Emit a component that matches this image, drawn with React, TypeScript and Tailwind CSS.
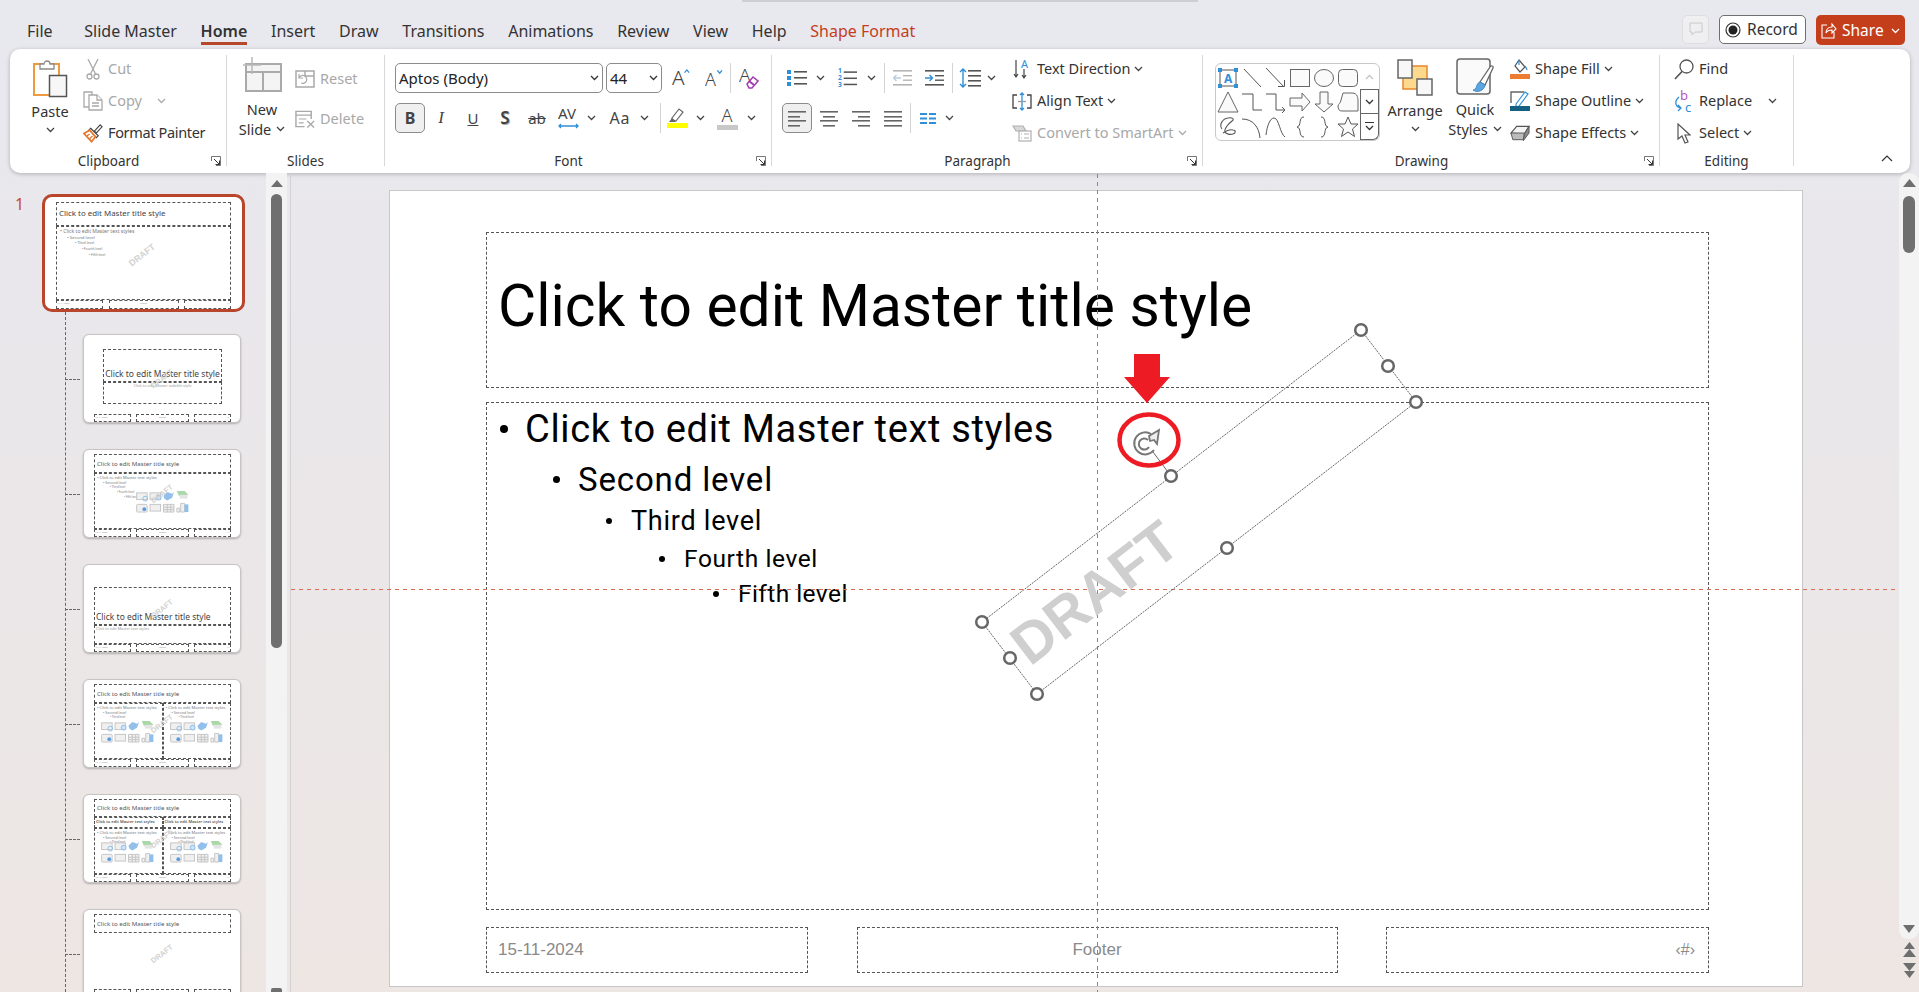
import type { ReactNode } from 'react';

const GRAY = '#a9a9a9';
const BLUE = '#2f8fd8';

function Chev({ color = '#444' }: { color?: string }) {
  return (
    <svg width="9" height="6" viewBox="0 0 9 6" className="shrink-0">
      <path d="M1 1l3.5 3.5L8 1" fill="none" stroke={color} strokeWidth="1.3" />
    </svg>
  );
}

function Slot({ className = '', children }: { className?: string; children?: ReactNode }) {
  return <div className={`flex shrink-0 items-center justify-center ${className}`}>{children}</div>;
}

function Sep({ className = '' }: { className?: string }) {
  return <div className={`w-px shrink-0 self-stretch bg-[#d4d4d4] ${className}`} />;
}

function GroupSep() {
  return <div className="mt-[2px] mb-[4px] w-px shrink-0 bg-[#d8d8d8]" />;
}

function Launcher() {
  return (
    <svg width="10" height="10" viewBox="0 0 10 10" className="mr-[5px] ml-[4px] shrink-0">
      <path d="M.5 5V.5H9.5V9.5H5" fill="none" stroke="#777" />
      <path d="M3 3l5.5 5.5M8.5 4.5v4h-4" fill="none" stroke="#333" />
    </svg>
  );
}

function GroupLabel({ children, launcher }: { children: string; launcher?: boolean }) {
  return (
    <div className="flex h-[21px] shrink-0 items-center pt-[3px] text-[13.5px] leading-[18px] text-[#333]">
      <div className="flex-1 text-center">{children}</div>
      {launcher && <Launcher />}
    </div>
  );
}

function Row({ icon, label, disabled, chev, chevClass = 'ml-[4px]', labelClass = '' }: { icon: ReactNode; label: string; disabled?: boolean; chev?: boolean; chevClass?: string; labelClass?: string }) {
  return (
    <div className={`flex h-[32px] items-center text-[14.5px] ${disabled ? 'text-[#a8a8a8]' : 'text-[#333]'}`}>
      <Slot className="w-[20px]">{icon}</Slot>
      <span className={`ml-[5px] whitespace-nowrap ${labelClass}`}>{label}</span>
      {chev && <span className={`flex ${chevClass}`}><Chev color={disabled ? '#aaa' : '#444'} /></span>}
    </div>
  );
}

function ComboBox({ className, text }: { className: string; text: string }) {
  return (
    <div className={`flex h-[30px] shrink-0 items-center justify-between rounded-[5px] border border-[#8b8b8b] bg-white pr-[3px] pl-[3px] text-[15px] leading-[20px] text-[#222] ${className}`}>
      <span>{text}</span>
      <Chev color="#333" />
    </div>
  );
}

function Lines({ rows, w = 18, color = '#666' }: { rows: number[][]; w?: number; color?: string }) {
  return (
    <svg width={w} height="18" viewBox={`0 0 ${w} 18`}>
      {rows.map(([a, b, y], i) => (
        <rect key={i} x={a} y={y} width={b - a} height="1.6" fill={color} />
      ))}
    </svg>
  );
}

function Bullets() {
  return (
    <svg width="20" height="18" viewBox="0 0 20 18">
      {[2, 8, 14].map(y => (
        <g key={y}>
          <rect x="0" y={y - 1} width="4" height="4" fill={BLUE} />
          <rect x="7" y={y} width="13" height="1.6" fill="#555" />
        </g>
      ))}
    </svg>
  );
}

function Numbering() {
  return (
    <svg width="20" height="20" viewBox="0 0 20 20">
      {[['1', 5], ['2', 12], ['3', 19]].map(([t, y]) => (
        <text key={t} x="0" y={y} fontSize="7" fontWeight="700" fill={BLUE} fontFamily="Noto Sans">{t}</text>
      ))}
      {[3, 9.5, 16].map(y => <rect key={y} x="6" y={y} width="14" height="1.6" fill="#555" />)}
    </svg>
  );
}

function IndentIcon({ dir }: { dir: 'in' | 'out' }) {
  const c = dir === 'out' ? '#b5b5b5' : '#555';
  return (
    <svg width="19" height="18" viewBox="0 0 19 18">
      <rect x="0" y="1" width="19" height="1.6" fill={c} />
      <rect x="0" y="15" width="19" height="1.6" fill={c} />
      <rect x="10" y="6" width="9" height="1.4" fill={c} />
      <rect x="10" y="10.5" width="9" height="1.4" fill={c} />
      {dir === 'in' ? (
        <path d="M0 9h7M4.500 6l3 3-3 3" fill="none" stroke={BLUE} strokeWidth="1.4" />
      ) : (
        <path d="M8 9H1M3.500 6l-3 3 3 3" fill="none" stroke="#b9cfe0" strokeWidth="1.4" />
      )}
    </svg>
  );
}

// ---- ribbon icons ----

function PasteIcon() {
  return (
    <svg width="35" height="39" viewBox="0 0 35 39">
      <rect x="1" y="5" width="25" height="31" fill="#fff" stroke="#ee9b40" strokeWidth="2" />
      <path d="M7 10V5h4a3 3 0 0 1 6 0h4v5z" fill="#fff" stroke="#8a8a8a" strokeWidth="1.3" />
      <rect x="16.500" y="16.500" width="17" height="21" fill="#f7f7f7" stroke="#555" strokeWidth="1.500" />
    </svg>
  );
}

function CutIcon() {
  return (
    <svg width="14" height="21" viewBox="0 0 14 21" fill="none" stroke={GRAY} strokeWidth="1.3">
      <path d="M2 0l7.500 15M12 0L4.500 15" />
      <circle cx="3.500" cy="17.500" r="2.500" />
      <circle cx="10.500" cy="17.500" r="2.500" />
    </svg>
  );
}

function CopyIcon() {
  return (
    <svg width="20" height="20" viewBox="0 0 20 20" fill="#fff" stroke={GRAY} strokeWidth="1.3">
      <path d="M1 1h8v15H1z" />
      <path d="M6 4h8l5 5v10H6z" />
      <path d="M14 4v5h5M9 12h7M9 15h7" />
    </svg>
  );
}

function PainterIcon() {
  return (
    <svg width="21" height="20" viewBox="0 0 21 20" fill="none">
      <path d="M12 8l6-6.500 2 2L14 10z" fill="#fff" stroke="#444" strokeWidth="1.2" />
      <path d="M8 5l8 8-2 2-8-8z" fill="#fff" stroke="#444" strokeWidth="1.2" />
      <path d="M7 7L1 10.500 9 19l4-5z" fill="#fff" stroke="#e8772e" strokeWidth="1.800" />
      <path d="M4 13l3-2M7 16l3-3" stroke="#e8772e" strokeWidth="1.400" />
    </svg>
  );
}

function NewSlideIcon() {
  return (
    <svg width="39" height="35" viewBox="0 0 39 35" fill="none" stroke="#aaa" strokeWidth="2">
      <rect x="3" y="7" width="35" height="27" fill="#f4f4f4" />
      <path d="M3 15h35M20 15v19" />
      <path d="M9 0v17M0 8h18" strokeWidth="1.500" stroke="#b8b8b8" />
    </svg>
  );
}

function ResetIcon() {
  return (
    <svg width="20" height="18" viewBox="0 0 20 18" fill="none" stroke={GRAY} strokeWidth="1.500">
      <rect x="1" y="1" width="18" height="16" />
      <path d="M10 1v5h9" />
      <path d="M4 8a4 4 0 1 1 2 5M4 4v4h4" strokeWidth="1.200" />
    </svg>
  );
}

function DeleteIcon() {
  return (
    <svg width="21" height="18" viewBox="0 0 21 18" fill="none" stroke={GRAY} strokeWidth="1.500">
      <path d="M17 9V1H1v16h9" />
      <path d="M1 5h16M4 9h8M4 13h5" strokeWidth="1.200" />
      <path d="M13 11l7 7M20 11l-7 7" strokeWidth="1.400" />
    </svg>
  );
}

function TextDirIcon() {
  return (
    <svg width="19" height="22" viewBox="0 0 19 22" fill="none" stroke="#444" strokeWidth="1.200">
      <path d="M3 2v17M1 16l2 3 2-3M11 11v9M9 17l2 3 2-3" />
      <text x="8" y="10" fontSize="11" fill={BLUE} stroke="none" fontFamily="Noto Sans">A</text>
    </svg>
  );
}

function AlignTextIcon() {
  return (
    <svg width="20" height="19" viewBox="0 0 20 19" fill="none" stroke="#444" strokeWidth="1.300">
      <path d="M5 3H1v13h4M15 3h4v13h-4" />
      <path d="M10 1v17M8 3l2-2 2 2M8 16l2 2 2-2" stroke={BLUE} />
      <path d="M6 9.500h8" stroke="#999" />
    </svg>
  );
}

function SmartArtIcon() {
  return (
    <svg width="20" height="17" viewBox="0 0 20 17" fill="none" stroke="#b0b0b0" strokeWidth="1.200">
      <path d="M1 1h10l3 5H4z" fill="#d8d8d8" />
      <rect x="7" y="6" width="12" height="10" fill="#fff" />
      <path d="M9 9h1M12 9h5M9 13h1M12 13h5" />
    </svg>
  );
}

function ArrangeIcon() {
  return (
    <svg width="37" height="37" viewBox="0 0 37 37">
      <rect x="6" y="7" width="24" height="23" fill="#fdd98e" stroke="#e8862e" strokeWidth="1.500" />
      <rect x="1" y="1" width="14" height="18" fill="#f8f8f8" stroke="#666" strokeWidth="1.500" />
      <rect x="20" y="20" width="15" height="16" fill="#f8f8f8" stroke="#666" strokeWidth="1.500" />
    </svg>
  );
}

function QuickStylesIcon() {
  return (
    <svg width="39" height="39" viewBox="0 0 39 39" fill="none">
      <rect x="1" y="1" width="33" height="35" rx="3" fill="#fafafa" stroke="#666" strokeWidth="1.500" />
      <path d="M24 24L34 9c1-2 4-1 3 1L29 27z" fill="#fff" stroke="#666" strokeWidth="1.300" />
      <path d="M24 24c-3 1-3 4-4 6-1 1-2 2-3 2 4 3 11 1 12-5z" fill="#5ba6e0" stroke="#3f87c2" strokeWidth="1" />
    </svg>
  );
}

function ShapeFillIcon() {
  return (
    <svg width="20" height="20" viewBox="0 0 20 20">
      <path d="M9 1l6 7-5 5-5-6z" fill="#fff" stroke="#555" strokeWidth="1.200" />
      <path d="M9 1v5M15 7c1 2 2 3 2 4" fill="none" stroke="#2f8fd8" strokeWidth="1.200" />
      <rect x="0" y="15" width="20" height="5" fill="#ed7d31" />
    </svg>
  );
}

function ShapeOutlineIcon() {
  return (
    <svg width="20" height="20" viewBox="0 0 20 20" fill="none">
      <path d="M1 12V1h13" stroke="#666" strokeWidth="1.400" />
      <path d="M6 13L15 1l3 2-9 12-3 1z" fill="#fff" stroke={BLUE} strokeWidth="1.200" />
      <rect x="0" y="15" width="20" height="5" fill="#156082" />
    </svg>
  );
}

function ShapeEffectsIcon() {
  return (
    <svg width="21" height="17" viewBox="0 0 21 17">
      <path d="M1 8l6-7h13l-5 8z" fill="#f4f4f4" stroke="#555" strokeWidth="1.200" />
      <path d="M15 9l5-8v7l-6 8z" fill="#8a8a8a" stroke="#555" strokeWidth="1" />
      <path d="M1 8h14l-1 7H3z" fill="#bbb" stroke="#555" strokeWidth="1" />
    </svg>
  );
}

function FindIcon() {
  return (
    <svg width="20" height="21" viewBox="0 0 20 21" fill="none" stroke="#555" strokeWidth="1.300">
      <circle cx="12.500" cy="7.500" r="6.500" />
      <path d="M8 12.500L1 20" strokeWidth="1.700" />
    </svg>
  );
}

function ReplaceIcon() {
  return (
    <svg width="20" height="24" viewBox="0 0 20 24" fill="none">
      <text x="6" y="11" fontSize="13" fill="#b455c8" fontFamily="Noto Sans">b</text>
      <text x="11" y="23" fontSize="13" fill={BLUE} fontFamily="Noto Sans">c</text>
      <path d="M5 8C0 12 1 18 7 19M4 16l3 3-3 3" stroke={BLUE} strokeWidth="1.300" />
    </svg>
  );
}

function SelectIcon() {
  return (
    <svg width="14" height="21" viewBox="0 0 14 21" fill="#fff" stroke="#555" strokeWidth="1.200">
      <path d="M1 1v15l4-3 3 7 3-1-3-7h5z" />
    </svg>
  );
}

function RecordDot() {
  return (
    <svg width="16" height="16" viewBox="0 0 16 16">
      <circle cx="8" cy="8" r="7" fill="none" stroke="#333" strokeWidth="1.200" />
      <circle cx="8" cy="8" r="4.500" fill="#222" />
    </svg>
  );
}

// ---- shapes gallery ----

const SHAPES: ReactNode[] = [
  <>
    <rect x="3" y="3" width="16" height="16" fill="none" stroke="#555" />
    <text x="7" y="16" fontSize="12" fontWeight="700" fill={BLUE} fontFamily="Noto Sans">A</text>
    {[[3, 3], [19, 3], [3, 19], [19, 19]].map(([x, y]) => <rect key={`${x}${y}`} x={x - 2} y={y - 2} width="4" height="4" fill={BLUE} />)}
  </>,
  <path d="M3 2l17 18" stroke="#555" fill="none" />,
  <path d="M1 1l18 19M13 19.500h6.500V13" stroke="#555" fill="none" />,
  <rect x="1.500" y="2.500" width="19" height="17" fill="#fafafa" stroke="#666" />,
  <ellipse cx="11" cy="11" rx="9.500" ry="8.500" fill="#fafafa" stroke="#666" />,
  <rect x="1.500" y="2.500" width="19" height="17" rx="4" fill="#fafafa" stroke="#666" />,
  <path d="M11 1l10 20H1z" fill="#fafafa" stroke="#666" />,
  <path d="M1 3h11v16h9" fill="none" stroke="#555" />,
  <path d="M1 3h10v16h9M17 16l3 3-3 3" fill="none" stroke="#555" />,
  <path d="M1 7h12V2l8 9-8 9v-5H1z" fill="#fafafa" stroke="#666" />,
  <path d="M7 1h8v12h5l-9 8-9-8h5z" fill="#fafafa" stroke="#666" />,
  <path d="M6 2h9c6 0 6 6 6 8v10H5c-3 0-4-2-4-5 0-2 3-3 3-6z" fill="#fafafa" stroke="#666" />,
  <path d="M5 13c-3-4 0-10 6-11 4-1 7 1 4 3-4 3-8 8-7 11 1 2 5 3 8 2 3-1 3-4 0-4-3-1-7 1-10 3" fill="none" stroke="#555" strokeWidth="1.100" />,
  <path d="M1 3c11 0 17 8 18 19" fill="none" stroke="#555" />,
  <path d="M1 19C2 10 5 2 9 2c5 0 6 16 11 19" fill="none" stroke="#555" />,
  <path d="M15 1c-6 0-2 9-7 10 5 1 1 10 7 10" fill="none" stroke="#555" />,
  <path d="M8 1c6 0 2 9 7 10-5 1-1 10-7 10" fill="none" stroke="#555" />,
  <path d="M11 1l3 7h7l-5.500 5 2 7.500-6.500-4.500-6.500 4.500 2-7.500L1 8h7z" fill="#fafafa" stroke="#555" />,
];

function ShapeGallery() {
  return (
    <div className="mt-[10px] ml-[12px] flex h-[78px] w-[165px] shrink-0 rounded-[6px] border border-[#c9c9c9] bg-white">
      <div className="grid w-[146px] grid-cols-6 grid-rows-3 pt-[2px] pb-[1px]">
        {SHAPES.map((s, i) => (
          <Slot key={i}>
            <svg width="22" height="22" viewBox="0 0 22 22">{s}</svg>
          </Slot>
        ))}
      </div>
      <div className="flex w-[19px] flex-col">
        <Slot className="h-[25px]">
          <svg width="9" height="6" viewBox="0 0 9 6"><path d="M1 5l3.500-3.500L8 5" fill="none" stroke="#c4c4c4" strokeWidth="1.300" /></svg>
        </Slot>
        <Slot className="h-[25px] border border-[#666] bg-white"><Chev color="#333" /></Slot>
        <Slot className="flex-1 flex-col gap-[2px] rounded-br-[6px] border border-t-0 border-[#666] bg-white">
          <div className="h-px w-[9px] bg-[#333]" />
          <Chev color="#333" />
        </Slot>
      </div>
    </div>
  );
}

// ---- ribbon ----

function ClipboardGroup() {
  return (
    <div className="flex w-[216px] shrink-0 flex-col">
      <div className="flex flex-1">
        <div className="ml-[15px] flex w-[50px] shrink-0 flex-col items-center pt-[6px] text-[14.5px] text-[#333]">
          <PasteIcon />
          <div className="mt-[3px] leading-[20px]">Paste</div>
          <div className="mt-[6px] flex"><Chev /></div>
        </div>
        <div className="ml-[8px] flex flex-col">
          <Row icon={<CutIcon />} label="Cut" disabled />
          <Row icon={<CopyIcon />} label="Copy" disabled chev chevClass="ml-[15px]" />
          <Row icon={<PainterIcon />} label="Format Painter" labelClass="tracking-[-0.35px]" />
        </div>
      </div>
      <GroupLabel launcher>Clipboard</GroupLabel>
    </div>
  );
}

function SlidesGroup() {
  return (
    <div className="flex w-[157px] shrink-0 flex-col">
      <div className="flex flex-1">
        <div className="ml-[9px] flex w-[52px] shrink-0 flex-col items-center pt-[4px] text-[14.5px] text-[#333]">
          <NewSlideIcon />
          <div className="mt-[7px] leading-[20px]">New</div>
          <div className="flex items-center gap-[5px] leading-[20px]">Slide <Chev /></div>
        </div>
        <div className="ml-[7px] flex flex-col gap-[8px] pt-[10px]">
          <Row icon={<ResetIcon />} label="Reset" disabled />
          <Row icon={<DeleteIcon />} label="Delete" disabled />
        </div>
      </div>
      <GroupLabel>Slides</GroupLabel>
    </div>
  );
}

function FontGroup() {
  return (
    <div className="flex w-[386px] shrink-0 flex-col">
      <div className="flex flex-1 flex-col gap-[10px] pt-[10px] pl-[10px]">
        <div className="flex h-[30px] items-center">
          <ComboBox className="w-[208px]" text="Aptos (Body)" />
          <ComboBox className="ml-[3px] w-[56px]" text="44" />
          <Slot className="ml-[10px] w-[18px] items-start">
            <svg width="20" height="22" viewBox="0 0 20 22">
              <text x="0" y="19" fontSize="23" fill="#444" fontFamily="Noto Sans" fontWeight="300">A</text>
              <path d="M14 5l2.500-3L19 5" fill="none" stroke={BLUE} strokeWidth="1.400" />
            </svg>
          </Slot>
          <Slot className="ml-[15px] w-[18px]">
            <svg width="19" height="20" viewBox="0 0 19 20">
              <text x="0" y="18" fontSize="19" fill="#444" fontFamily="Noto Sans" fontWeight="300">A</text>
              <path d="M13 2l2.500 3L18 2" fill="none" stroke={BLUE} strokeWidth="1.400" />
            </svg>
          </Slot>
          <Sep className="ml-[7px]" />
          <Slot className="ml-[8px] w-[20px]">
            <svg width="20" height="22" viewBox="0 0 20 22">
              <text x="0" y="15" fontSize="19" fill="#444" fontFamily="Noto Sans" fontWeight="300">A</text>
              <path d="M8 17l6-7 5 4-6 7h-3z" fill="#fff" stroke="#a23bb5" strokeWidth="1.500" />
              <path d="M10 14l5 4" stroke="#a23bb5" strokeWidth="2" />
            </svg>
          </Slot>
        </div>
        <div className="flex h-[30px] items-center leading-[20px] text-[#444]">
          <Slot className="h-[30px] w-[30px] rounded-[5px] border border-[#8b8b8b] bg-[#f0f0f0] text-[16px] font-bold">B</Slot>
          <Slot className="w-[32px] font-['Liberation_Serif'] text-[17px] italic">I</Slot>
          <Slot className="w-[32px] text-[15px] underline">U</Slot>
          <Slot className="w-[32px] text-[17px] font-semibold [text-shadow:1px_1px_0_#aaa]">S</Slot>
          <Slot className="w-[32px] text-[15px] line-through">ab</Slot>
          <Slot className="w-[32px]">
            <svg width="22" height="24" viewBox="0 0 22 24">
              <text x="0" y="13" fontSize="15" fill="#444" fontFamily="Noto Sans">AV</text>
              <path d="M1 20h19M3 18l-2 2 2 2M18 18l2 2-2 2" fill="none" stroke={BLUE} strokeWidth="1.300" />
            </svg>
          </Slot>
          <Slot className="w-[12px]"><Chev /></Slot>
          <Slot className="ml-[4px] w-[38px] text-[16px] tracking-[1px]">Aa</Slot>
          <Slot className="w-[10px]"><Chev /></Slot>
          <Sep className="ml-[11px]" />
          <Slot className="ml-[5px] w-[22px]">
            <svg width="21" height="20" viewBox="0 0 21 20">
              <path d="M5 10L12 1l4 3-7 9H5z" fill="#fff" stroke="#666" strokeWidth="1.200" />
              <path d="M2 14l3-4 4 3-1 1z" fill="#666" />
              <rect x="0" y="15" width="21" height="5" fill="#ffff00" />
            </svg>
          </Slot>
          <Slot className="ml-[6px] w-[12px]"><Chev /></Slot>
          <Slot className="ml-[10px] w-[22px]">
            <div className="flex flex-col items-center">
              <span className="text-[18px] leading-[16px] font-light">A</span>
              <div className="mt-[2px] h-[5px] w-[21px] bg-[#c8c8c8]" />
            </div>
          </Slot>
          <Slot className="ml-[7px] w-[12px]"><Chev /></Slot>
        </div>
      </div>
      <GroupLabel launcher>Font</GroupLabel>
    </div>
  );
}

const ALIGN_LEFT = [[0, 18, 2], [0, 12, 7], [0, 18, 11], [0, 12, 16]];
const ALIGN_CENTER = [[0, 18, 2], [3, 15, 7], [0, 18, 11], [3, 15, 16]];
const ALIGN_RIGHT = [[0, 18, 2], [6, 18, 7], [0, 18, 11], [6, 18, 16]];
const ALIGN_JUST = [[0, 18, 2], [0, 18, 7], [0, 18, 11], [0, 18, 16]];

function ParagraphGroup() {
  return (
    <div className="flex w-[430px] shrink-0 flex-col">
      <div className="flex flex-1">
        <div className="flex w-[240px] shrink-0 flex-col gap-[10px] pt-[10px]">
          <div className="flex h-[30px] items-center">
            <Slot className="ml-[15px] w-[20px]"><Bullets /></Slot>
            <Slot className="ml-[7px] w-[12px]"><Chev /></Slot>
            <Slot className="ml-[12px] w-[19px]"><Numbering /></Slot>
            <Slot className="ml-[8px] w-[12px]"><Chev /></Slot>
            <Sep className="ml-[7px]" />
            <Slot className="ml-[8px] w-[19px]"><IndentIcon dir="out" /></Slot>
            <Slot className="ml-[13px] w-[19px]"><IndentIcon dir="in" /></Slot>
            <Sep className="ml-[8px]" />
            <Slot className="ml-[6px] w-[22px]">
              <svg width="22" height="20" viewBox="0 0 22 20">
                <path d="M4 1v18M1 4l3-3 3 3M1 16l3 3 3-3" fill="none" stroke={BLUE} strokeWidth="1.400" />
                {[2, 7, 12, 17].map(y => <rect key={y} x="9" y={y} width="13" height="1.600" fill="#555" />)}
              </svg>
            </Slot>
            <Slot className="ml-[4px] w-[12px]"><Chev /></Slot>
          </div>
          <div className="flex h-[30px] items-center">
            <Slot className="ml-[10px] h-[30px] w-[30px] rounded-[5px] border border-[#8b8b8b] bg-[#efefef]"><Lines rows={ALIGN_LEFT} /></Slot>
            <Slot className="ml-[8px] w-[18px]"><Lines rows={ALIGN_CENTER} /></Slot>
            <Slot className="ml-[14px] w-[18px]"><Lines rows={ALIGN_RIGHT} /></Slot>
            <Slot className="ml-[14px] w-[18px]"><Lines rows={ALIGN_JUST} /></Slot>
            <Sep className="ml-[8px]" />
            <Slot className="ml-[9px] w-[16px]">
              <svg width="16" height="11" viewBox="0 0 16 11" fill={BLUE}>
                <rect x="0" y="0" width="7" height="2" /><rect x="9" y="0" width="7" height="2" />
                <rect x="0" y="4.500" width="7" height="2" /><rect x="9" y="4.500" width="7" height="2" />
                <rect x="0" y="9" width="7" height="2" /><rect x="9" y="9" width="7" height="2" />
              </svg>
            </Slot>
            <Slot className="ml-[7px] w-[12px]"><Chev /></Slot>
          </div>
        </div>
        <div className="flex flex-col">
          <Row icon={<TextDirIcon />} label="Text Direction" chev />
          <Row icon={<AlignTextIcon />} label="Align Text" chev />
          <Row icon={<SmartArtIcon />} label="Convert to SmartArt" disabled chev />
        </div>
      </div>
      <GroupLabel launcher>Paragraph</GroupLabel>
    </div>
  );
}

function DrawingGroup() {
  return (
    <div className="flex w-[456px] shrink-0 flex-col">
      <div className="flex flex-1">
        <ShapeGallery />
        <div className="ml-[5px] flex w-[60px] shrink-0 flex-col items-center pt-[6px] text-[14.5px] text-[#333]">
          <ArrangeIcon />
          <div className="mt-[4px] leading-[20px]">Arrange</div>
          <div className="mt-[6px] flex"><Chev /></div>
        </div>
        <div className="flex w-[60px] shrink-0 flex-col items-center pt-[5px] text-[14.5px] text-[#333]">
          <QuickStylesIcon />
          <div className="mt-[2px] leading-[20px]">Quick</div>
          <div className="flex items-center gap-[5px] leading-[20px]">Styles <Chev /></div>
        </div>
        <div className="ml-[5px] flex flex-col">
          <Row icon={<ShapeFillIcon />} label="Shape Fill" chev />
          <Row icon={<ShapeOutlineIcon />} label="Shape Outline" chev />
          <Row icon={<ShapeEffectsIcon />} label="Shape Effects" chev />
        </div>
      </div>
      <GroupLabel launcher>Drawing</GroupLabel>
    </div>
  );
}

function EditingGroup() {
  return (
    <div className="flex w-[133px] shrink-0 flex-col">
      <div className="ml-[14px] flex flex-1 flex-col">
        <Row icon={<FindIcon />} label="Find" />
        <Row icon={<ReplaceIcon />} label="Replace" chev chevClass="ml-[16px]" />
        <Row icon={<SelectIcon />} label="Select" chev />
      </div>
      <GroupLabel>Editing</GroupLabel>
    </div>
  );
}

function Ribbon() {
  return (
    <div className="mr-[9px] ml-[10px] flex h-[124px] shrink-0 rounded-[10px] bg-white pt-[4px] pb-[3px] shadow-[0_1px_4px_rgba(0,0,0,0.25)]">
      <ClipboardGroup />
      <GroupSep />
      <SlidesGroup />
      <GroupSep />
      <FontGroup />
      <GroupSep />
      <ParagraphGroup />
      <GroupSep />
      <DrawingGroup />
      <GroupSep />
      <EditingGroup />
      <GroupSep />
      <div className="flex flex-1 items-end justify-end pr-[17px] pb-[8px]">
        <svg width="12" height="7" viewBox="0 0 12 7"><path d="M1 6l5-5 5 5" fill="none" stroke="#333" strokeWidth="1.200" /></svg>
      </div>
    </div>
  );
}

function TopBar() {
  const tabs = ['File', 'Slide Master', 'Home', 'Insert', 'Draw', 'Transitions', 'Animations', 'Review', 'View', 'Help'];
  return (
    <div className="relative flex h-[49px] shrink-0 justify-between pl-[27px]">
      <div className="absolute top-0 left-[742px] h-[2px] w-[456px] bg-[#cdcdd2]" />
      <div className="flex gap-[23.7px] pt-[13px] text-[16px] text-[#333]">
        {tabs.map(t => (
          <div key={t} className={`h-[32px] pt-[6px] leading-[24px] ${t === 'File' ? 'mr-[8px]' : ''} ${t === 'Home' ? 'border-b-[3px] border-[#b7472a] font-semibold' : ''}`}>{t}</div>
        ))}
        <div className="h-[32px] pt-[6px] leading-[24px] text-[#c43e1c]">Shape Format</div>
      </div>
      <div className="flex items-start gap-[10px] pt-[15px] pr-[14px] text-[15.5px]">
        <Slot className="h-[29px] w-[27px] rounded-[5px] border border-[#dedede] bg-[#efeff1]">
          <svg width="14" height="15" viewBox="0 0 14 15"><path d="M1 1h12v9H6l-3 3v-3H1z" fill="none" stroke="#c8c8c8" /></svg>
        </Slot>
        <div className="flex h-[29px] w-[87px] items-center gap-[6px] rounded-[5px] border border-[#6f6f6f] bg-white pt-px pl-[5px] text-[#333]">
          <RecordDot />Record
        </div>
        <div className="flex h-[30px] w-[89px] items-center rounded-[5px] bg-[#c43e1c] pt-px pl-[5px] text-white">
          <svg width="16" height="17" viewBox="0 0 16 17" fill="none" stroke="#fff" strokeWidth="1.100"><path d="M6 3H1v13h12V10" /><path d="M5 11c0-4 3-6 6-6V2l4 5-4 4V8c-3 0-5 1-6 3z" /></svg>
          <span className="ml-[5px]">Share</span>
          <span className="ml-[7px] flex"><Chev color="#fff" /></span>
        </div>
      </div>
    </div>
  );
}

// ---- thumbnails ----

const dash = 'border border-dashed border-[#555]';

function Draft({ className = '' }: { className?: string }) {
  return <div className={`absolute -rotate-[38deg] font-['Liberation_Sans'] leading-none font-bold text-[#d2d2d2] ${className}`}>DRAFT</div>;
}

function MiniDraft() {
  return <Draft className="top-1/2 left-1/2 -translate-x-1/2 -translate-y-1/2 text-[7.500px]" />;
}

function ContentIcons() {
  return (
    <svg width="55" height="23" viewBox="0 0 56 24" className="shrink-0">
      <g fill="#f0f0f0" stroke="#c4c4c4" strokeWidth="1">
        <rect x="1" y="3" width="11" height="7" />
        <rect x="15" y="3" width="11" height="7" />
        <rect x="1" y="15" width="11" height="8" rx="1" />
        <rect x="15" y="15" width="11" height="7" />
        <path d="M29 15h11v8H29zM29 18h11M29 20.500h11M33 15v8M36.500 15v8" />
        <path d="M43 23v-4h3v4zM47 23v-9h4v9z" />
      </g>
      <circle cx="10" cy="9" r="2.500" fill="none" stroke="#8bbce8" />
      <circle cx="24" cy="8" r="2.500" fill="#cfe4f7" stroke="#8bbce8" />
      <path d="M29 6l4-4 5 2 2-2-2 6-5 3-3-2z" fill="#93c0ea" />
      <path d="M43 1h8l4 4-4 1h-6z" fill="#a8d8a8" />
      <rect x="46" y="5" width="8" height="4" fill="#e4e4e4" />
      <circle cx="9" cy="20" r="2" fill="#5a9be0" />
      <rect x="51" y="15" width="4" height="8" fill="#8fbfec" />
    </svg>
  );
}

function MiniBody({ iconCls, deep }: { iconCls: string; deep?: boolean }) {
  return (
    <div className={`relative min-w-0 flex-1 pt-[1px] pl-[2px] leading-[5px] text-[#777] ${dash}`}>
      <div className="text-[4.100px] whitespace-nowrap">• Click to edit Master text styles</div>
      <div className="ml-[6px] text-[3.600px] whitespace-nowrap">• Second level</div>
      <div className="ml-[13px] text-[2.800px] whitespace-nowrap">• Third level</div>
      {deep && <div className="ml-[20px] text-[2.800px] whitespace-nowrap">• Fourth level</div>}
      {deep && <div className="ml-[27px] text-[2.600px] whitespace-nowrap">• Fifth level</div>}
      <div className={`absolute ${iconCls}`}><ContentIcons /></div>
    </div>
  );
}

function MiniFooter() {
  return (
    <div className="flex h-[8px] shrink-0 justify-between text-[2.500px] leading-[5px] text-[#999]">
      <div className={`w-[37px] ${dash}`}>15-11-2024</div>
      <div className={`w-[53px] text-center ${dash}`}>Footer</div>
      <div className={`w-[37px] text-right ${dash}`}>‹#›</div>
    </div>
  );
}

function ThumbFrame({ children }: { children: ReactNode }) {
  return (
    <div className="relative h-[89px] w-[158px] shrink-0">
      <div className="absolute top-1/2 -left-[18px] w-[15px] border-t border-dashed border-[#666]" />
      <div className="relative flex h-full flex-col overflow-hidden rounded-[6px] border border-[#c8c4c4] bg-white pt-[4px] pr-[9px] pl-[10px] shadow-[0_1px_2px_rgba(0,0,0,0.25)]">
        {children}
      </div>
    </div>
  );
}

function MiniTitle({ cls = 'h-[19px]' }: { cls?: string }) {
  return (
    <div className={`flex shrink-0 items-center overflow-hidden pl-[2px] text-[6.100px] whitespace-nowrap text-[#555] ${dash} ${cls}`}>
      Click to edit Master title style
    </div>
  );
}

function Thumbnails() {
  return (
    <div className="relative flex w-[291px] shrink-0 overflow-hidden border-r border-[#d2d2d2]">
      <div className="relative w-[266px] shrink-0">
        <div className="absolute top-[139px] bottom-0 left-[65px] border-l border-dashed border-[#666]" />
        <div className="flex pt-[21px]">
          <div className="w-[42px] shrink-0 pl-[15px] text-[16px] leading-[20px] text-[#c8482c]">1</div>
          <div className="relative flex h-[118px] w-[203px] flex-col rounded-[10px] border-[3.500px] border-[#b8452c] bg-white pt-[5px] pr-[11px] pl-[11px]">
            <div className={`flex h-[24px] shrink-0 items-center pl-[2px] text-[7.900px] whitespace-nowrap text-[#444] ${dash}`}>Click to edit Master title style</div>
            <div className={`flex-1 pt-[1px] pl-[3px] leading-[6px] text-[#777] ${dash}`}>
              <div className="text-[5.100px] whitespace-nowrap">• Click to edit Master text styles</div>
              <div className="ml-[7px] text-[4.300px] whitespace-nowrap">• Second level</div>
              <div className="ml-[15px] text-[3.500px] whitespace-nowrap">• Third level</div>
              <div className="ml-[22px] text-[3.300px] whitespace-nowrap">• Fourth level</div>
              <div className="ml-[29px] text-[3.200px] whitespace-nowrap">• Fifth level</div>
            </div>
            <div className="flex h-[9px] shrink-0 justify-between text-[2.500px] leading-[5px] text-[#999]">
              <div className={`w-[47px] ${dash}`}>15-11-2024</div>
              <div className={`w-[70px] text-center ${dash}`}>Footer</div>
              <div className={`w-[47px] text-right ${dash}`}>‹#›</div>
            </div>
            <Draft className="top-[54px] left-[82px] text-[9px]" />
          </div>
        </div>
        <div className="mt-[22px] flex flex-col gap-[26px] pl-[83px]">
          <ThumbFrame>
            <div className="flex flex-1 flex-col px-[9px] pt-[10px]">
              <div className={`flex h-[33px] shrink-0 items-end justify-center whitespace-nowrap text-[8.500px] text-[#444] ${dash}`}>Click to edit Master title style</div>
              <div className={`flex h-[22px] shrink-0 justify-center text-[3.800px] leading-[6px] text-[#999] ${dash}`}>Click to edit Master subtitle style</div>
            </div>
            <MiniFooter />
            <MiniDraft />
          </ThumbFrame>
          <ThumbFrame>
            <MiniTitle />
            <MiniBody iconCls="top-[16px] left-[40px]" deep />
            <MiniFooter />
            <MiniDraft />
          </ThumbFrame>
          <ThumbFrame>
            <div className="h-[18px] shrink-0" />
            <div className={`flex h-[38px] shrink-0 items-end overflow-hidden pb-[1px] pl-[1px] whitespace-nowrap text-[8.500px] leading-[12px] text-[#444] ${dash}`}>Click to edit Master title style</div>
            <div className={`flex-1 pl-[1px] text-[3.800px] leading-[6px] text-[#999] ${dash}`}>Click to edit Master text styles</div>
            <MiniFooter />
            <MiniDraft />
          </ThumbFrame>
          <ThumbFrame>
            <MiniTitle />
            <div className="flex min-h-0 flex-1"><MiniBody iconCls="top-[16px] left-[5px]" /><MiniBody iconCls="top-[16px] left-[5px]" /></div>
            <MiniFooter />
            <MiniDraft />
          </ThumbFrame>
          <ThumbFrame>
            <MiniTitle cls="h-[18px]" />
            <div className="flex h-[11px] shrink-0 text-[4px] leading-[8px] font-semibold text-[#555]">
              <div className={`flex-1 overflow-hidden pl-[1px] whitespace-nowrap ${dash}`}>Click to edit Master text styles</div>
              <div className={`flex-1 overflow-hidden pl-[1px] whitespace-nowrap ${dash}`}>Click to edit Master text styles</div>
            </div>
            <div className="flex min-h-0 flex-1"><MiniBody iconCls="top-[11px] left-[5px]" /><MiniBody iconCls="top-[11px] left-[5px]" /></div>
            <MiniFooter />
            <MiniDraft />
          </ThumbFrame>
          <ThumbFrame>
            <MiniTitle />
            <div className="flex-1" />
            <MiniFooter />
            <MiniDraft />
          </ThumbFrame>
        </div>
      </div>
      <div className="flex w-[21px] shrink-0 flex-col items-center bg-[#f3f3f3] pt-[7px]">
        <svg width="12" height="7" viewBox="0 0 12 7"><path d="M6 0l6 7H0z" fill="#6e6e6e" /></svg>
        <div className="mt-[7px] h-[454px] w-[11px] shrink-0 rounded-full bg-[#6f6f6f]" />
        <div className="mt-auto h-[4px] w-[11px] shrink-0 rounded-t-[2px] bg-[#6f6f6f]" />
      </div>
    </div>
  );
}

// ---- slide ----

function Level({ cls, text, dot, textCls }: { cls: string; text: string; dot: string; textCls: string }) {
  return (
    <div className={`flex items-center whitespace-nowrap text-black ${cls}`}>
      <div className="flex w-[26px] shrink-0">
        <div className={`rounded-full bg-black ${dot}`} />
      </div>
      <span className={textCls}>{text}</span>
    </div>
  );
}

function Slide() {
  return (
    <div className="mt-[17px] ml-[98px] flex h-[797px] w-[1414px] shrink-0 flex-col border border-[#c6c6c6] bg-white pt-[41px] pr-[93px] pl-[96px] font-['Roboto']">
      <div className={`flex h-[156px] shrink-0 items-center pb-[8px] pl-[11px] text-[58.700px] text-black ${dash}`}>
        Click to edit Master title style
      </div>
      <div className={`mt-[14px] h-[508px] shrink-0 ${dash}`}>
        <Level cls="h-[52px] pl-[12px]" dot="ml-[1px] h-[8px] w-[8px]" textCls="text-[38px] tracking-[0.65px]" text="Click to edit Master text styles" />
        <Level cls="h-[49px] pl-[65px]" dot="ml-[1px] h-[7px] w-[7px]" textCls="text-[33px] tracking-[0.85px]" text="Second level" />
        <Level cls="h-[34px] pl-[118px]" dot="ml-[1px] h-[6px] w-[6px]" textCls="text-[27px] tracking-[0.75px]" text="Third level" />
        <Level cls="h-[42px] pl-[171px]" dot="ml-[1px] h-[6px] w-[6px]" textCls="text-[24.500px] tracking-[0.6px]" text="Fourth level" />
        <Level cls="h-[28px] pl-[225px]" dot="ml-[1px] h-[6px] w-[6px]" textCls="text-[24.500px] tracking-[0.43px]" text="Fifth level" />
      </div>
      <div className="mt-[17px] flex h-[46px] shrink-0 justify-between font-['Liberation_Sans'] text-[17px] text-[#8a8a8a]">
        <div className={`flex w-[322px] items-center pl-[11px] ${dash}`}>15-11-2024</div>
        <div className={`flex w-[481px] items-center justify-center ${dash}`}>Footer</div>
        <div className={`flex w-[323px] items-center justify-end pr-[13px] text-[16px] ${dash}`}>‹#›</div>
      </div>
    </div>
  );
}

// selection, guides and the red markup drawn over the slide
function CanvasOverlay() {
  const handles = [[1361, 330], [1388, 366], [1416, 402], [1227, 548], [1037, 694], [1010, 658], [982, 622], [1171, 476]];
  return (
    <svg width="1919" height="992" viewBox="0 0 1919 992" className="pointer-events-none absolute top-0 left-0">
      <g stroke="#d9694f" strokeWidth="1" strokeDasharray="4 4">
        <path d="M1097.500 174V992" />
        <path d="M291 589.500H1899" />
      </g>
      <path d="M982 622L1361 330L1416 402L1037 694Z" fill="none" stroke="#666" strokeWidth="1" strokeDasharray="2 1" />
      <path d="M1153 452L1171 476" stroke="#666" strokeWidth="1" />
      <text transform="translate(1030 667) rotate(-37.6)" fontFamily="Liberation Sans" fontWeight="700" fontSize="57" fill="#cfcfcf">DRAFT</text>
      {handles.map(([x, y]) => (
        <circle key={`${x}-${y}`} cx={x} cy={y} r="5.800" fill="#fff" stroke="#666" strokeWidth="2.500" />
      ))}
      <path d="M1134 354h26v23h10l-23 26-23-26h10z" fill="#ed1c24" />
      <ellipse cx="1149" cy="440" rx="29.500" ry="25.500" fill="none" stroke="#ed1c24" strokeWidth="4.500" />
      <g fill="none" stroke="#777" strokeWidth="2">
        <path d="M1151 434A11 11 0 1 0 1154 450" />
        <path d="M1148 440A5.500 5.500 0 1 0 1149 447" />
      </g>
      <path d="M1149 436l10-6-2 14-3-4-4 1z" fill="#eee" stroke="#777" strokeWidth="1.800" />
    </svg>
  );
}

function RightScroll() {
  return (
    <div className="ml-auto flex w-[20px] shrink-0 flex-col items-center">
      <div className="flex h-[766px] w-full shrink-0 flex-col items-center rounded-[9px] bg-[#f3f3f3] pt-[6px]">
        <svg width="13" height="8" viewBox="0 0 13 8"><path d="M6.500 0L13 8H0z" fill="#6e6e6e" /></svg>
        <div className="mt-[9px] h-[57px] w-[12px] rounded-full bg-[#6f6f6f]" />
        <svg width="12" height="8" viewBox="0 0 12 8" className="mt-auto mb-[6px]"><path d="M6 8L12 0H0z" fill="#6e6e6e" /></svg>
      </div>
      <svg width="13" height="37" viewBox="0 0 13 37" className="mt-[3px]" fill="#6e6e6e">
        <path d="M6.500 0L12 7H1zM6.500 7L13 15H0z" />
        <path d="M0 21h13l-6.500 8zM1 29h11l-5.500 7z" />
      </svg>
    </div>
  );
}

export default function App() {
  return (
    <div className="relative flex h-[992px] w-[1919px] flex-col overflow-hidden bg-linear-to-b from-[#e8e8ef] to-[#ede6e3] font-['Noto_Sans']">
      <TopBar />
      <Ribbon />
      <div className="flex min-h-0 flex-1">
        <Thumbnails />
        <Slide />
        <RightScroll />
      </div>
      <CanvasOverlay />
    </div>
  );
}
